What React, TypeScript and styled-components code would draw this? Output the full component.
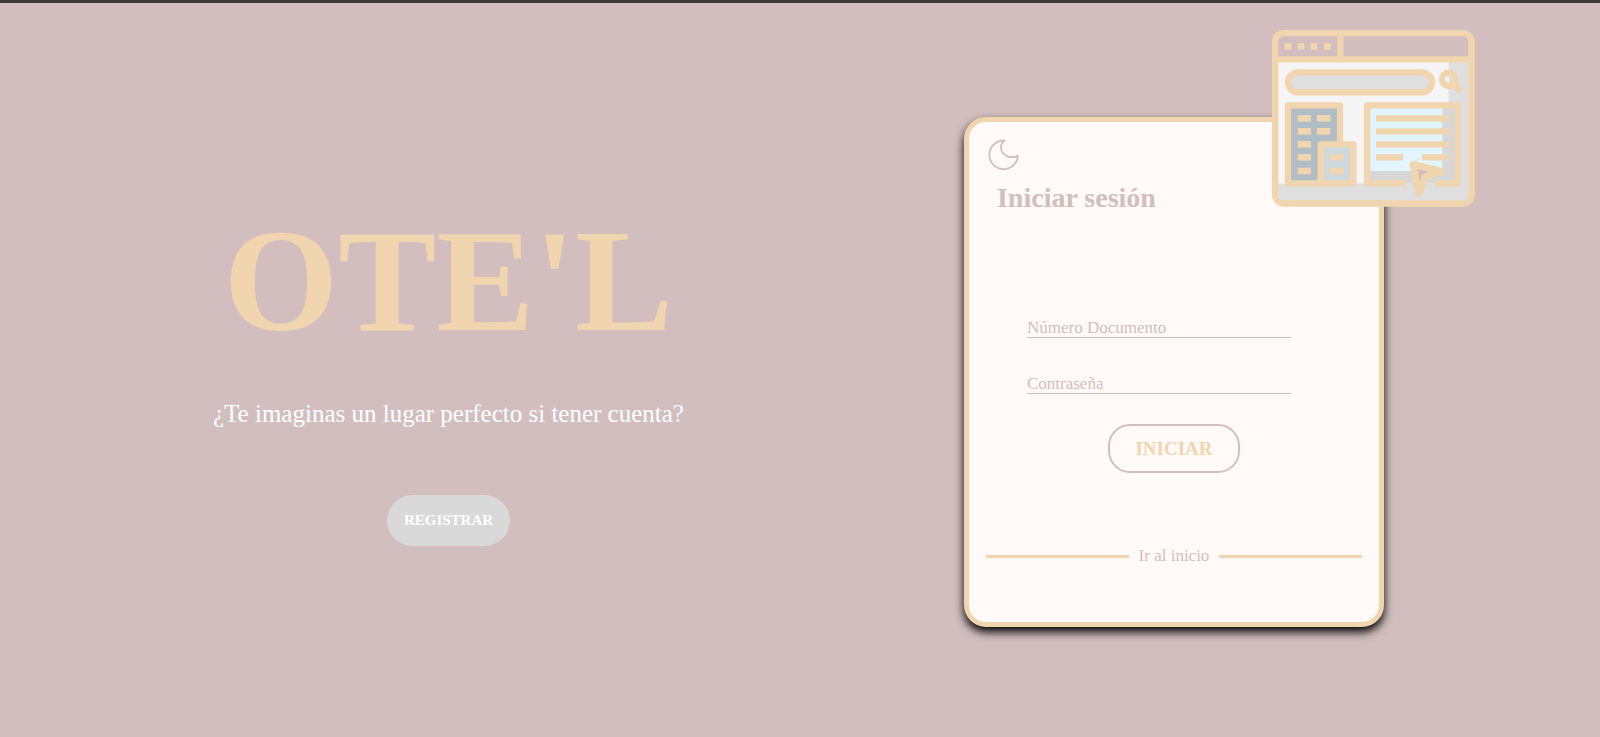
import React from "react";
import styled, { createGlobalStyle } from "styled-components";

const mauve = "#d2bebf";
const sand = "#f0d5ae";
const cream = "#fffaf7";

const GlobalStyle = createGlobalStyle`
  *, *::before, *::after { box-sizing: border-box; }
  html, body, #root { height: 100%; }
  body {
    margin: 0;
    background: ${mauve};
    font-family: "Liberation Serif", "Times New Roman", serif;
  }
`;

const Page = styled.div`
  min-height: 100%;
  display: flex;
  flex-direction: column;
  border-top: 3px solid #3d3b3a;
`;

const Main = styled.main`
  flex: 1;
  display: flex;
  flex-wrap: wrap;
  align-items: center;
  justify-content: space-around;
  padding: 4px 76px 0 73px;
`;

const Intro = styled.section`
  display: flex;
  flex-direction: column;
  align-items: center;
  gap: 32px;
`;

const Brand = styled.h1`
  margin: 0 0 4px;
  color: ${sand};
  font-size: 147px;
  line-height: 164px;
`;

const Tagline = styled.p`
  margin: 0 0 34px;
  color: #fff;
  font-size: 25px;
  line-height: 30px;
`;

const RegisterButton = styled.button`
  padding: 17px;
  border: 0;
  border-radius: 26px;
  background: #d9d9d9;
  color: #fff;
  font: bold 15px/17px "Liberation Serif", serif;
  cursor: pointer;
`;

const Card = styled.section`
  position: relative;
  width: 420px;
  padding: 17px 17px 56px;
  border: 5px solid ${sand};
  border-radius: 22px;
  background: ${cream};
  box-shadow: 0 5px 10px #000;
`;

const Illustration = styled.svg`
  position: absolute;
  top: -92px;
  right: -96px;
  width: 203px;
  height: 177px;
`;

const ThemeButton = styled.button`
  display: block;
  margin-left: 2px;
  padding: 0;
  border: 0;
  background: none;
  cursor: pointer;

  svg { display: block; }
`;

const Title = styled.h2`
  margin: 12px 0 0 11px;
  color: ${mauve};
  font-size: 28px;
  line-height: 32px;
`;

const Form = styled.form`
  display: flex;
  flex-direction: column;
  gap: 30px;
  padding: 98px 0 0 41px;
`;

const Field = styled.div`
  position: relative;
  width: 264px;

  label {
    position: absolute;
    left: 0;
    bottom: 0;
    color: ${mauve};
    font-size: 17px;
    line-height: 20px;
    pointer-events: none;
  }

  input {
    display: block;
    width: 100%;
    height: 26px;
    padding: 0;
    border: 0;
    border-bottom: 1px solid ${mauve};
    outline: 0;
    background: none;
    color: #8c7778;
    font: 17px/20px "Liberation Serif", serif;
  }

  input:focus + label,
  input:not(:placeholder-shown) + label {
    bottom: 22px;
  }
`;

const SubmitButton = styled.button`
  align-self: center;
  width: 132px;
  height: 49px;
  margin-right: 41px;
  padding: 0;
  border: 2px solid ${mauve};
  border-radius: 22px;
  background: none;
  color: ${sand};
  font: bold 19px/22px "Liberation Serif", serif;
  cursor: pointer;
`;

const HomeRow = styled.div`
  display: flex;
  align-items: center;
  gap: 10px;
  margin-top: 73px;

  &::before,
  &::after {
    content: "";
    flex: 1;
    height: 3px;
    background: ${sand};
  }

  a {
    color: ${mauve};
    font-size: 17px;
    line-height: 20px;
    text-decoration: none;
  }
`;

function Moon() {
  return (
    <svg width="31" height="31" viewBox="115 118 93 93" fill="none" stroke={mauve} strokeWidth="5.5" strokeLinejoin="round" aria-hidden="true">
      <path d="M165 122.500A43 43 0 1 0 205 168C185 179 154 169 154 142C154 134 158 127 165 122.500Z" />
    </svg>
  );
}

function BrowserDrawing() {
  const windows = [
    [113, 285], [171, 285], [113, 324], [171, 324], [113, 363],
    [113, 402], [113, 443], [211, 402], [211, 443],
  ];
  return (
    <Illustration viewBox="36 30 609 531" aria-hidden="true">
      <path d="M45 118H634V530Q634 551 612 551H67Q45 551 45 530Z" fill="#f5f5f5" />
      <path d="M566 118H634V530Q634 551 612 551H67Q45 551 45 530V491H566Z" fill="#dfdfdf" />
      <path d="M45 118V64Q45 39 70 39H610Q634 39 634 64V118Z" fill={mauve} />
      <rect x="321" y="256" width="273" height="235" fill="#d7d7d7" />
      <rect x="321" y="256" width="226" height="197" fill="#e2f4fd" />
      <rect x="84" y="256" width="156" height="235" fill="#b0bdc5" />
      <rect x="182" y="373" width="98" height="118" fill="#cfd8dc" />
      <g fill="none" stroke={sand} strokeWidth="19" strokeLinejoin="round">
        <rect x="45.500" y="39.500" width="589" height="511" rx="25" />
        <path d="M45 118H634M241 39V118" />
        <rect x="84" y="157" width="432" height="60" rx="30" fill="#dfdfdf" />
        <path d="M182 490H84V256H240V373" />
        <rect x="182" y="373" width="98" height="117" />
        <path d="M438 490H321V256H594V490H526" />
        <path d="M348 295H566M348 334H566M348 373H566M348 412H429M486 412H566" />
        <circle cx="566" cy="178" r="20" />
        <path d="M580 192L603 214" />
        <path d="M459 433L545 454L495 471L476 520Z" fill={mauve} strokeWidth="21" />
      </g>
      <g fill={sand}>
        {[74, 113, 152, 192].map((x) => (
          <rect key={x} x={x} y="69" width="20" height="20" />
        ))}
        {windows.map(([x, y]) => (
          <rect key={`${x}-${y}`} x={x} y={y} width="40" height="20" />
        ))}
      </g>
    </Illustration>
  );
}

export default function App() {
  return (
    <>
      <GlobalStyle />
      <Page>
        <Main>
          <Intro>
            <Brand>OTE'L</Brand>
            <Tagline>¿Te imaginas un lugar perfecto si tener cuenta?</Tagline>
            <RegisterButton type="button">REGISTRAR</RegisterButton>
          </Intro>
          <Card>
            <BrowserDrawing />
            <ThemeButton type="button" aria-label="Modo oscuro">
              <Moon />
            </ThemeButton>
            <Title>Iniciar sesión</Title>
            <Form onSubmit={(event) => event.preventDefault()}>
              <Field>
                <input id="documento" type="text" placeholder=" " />
                <label htmlFor="documento">Número Documento</label>
              </Field>
              <Field>
                <input id="clave" type="password" placeholder=" " />
                <label htmlFor="clave">Contraseña</label>
              </Field>
              <SubmitButton type="submit">INICIAR</SubmitButton>
            </Form>
            <HomeRow>
              <a href="#inicio">Ir al inicio</a>
            </HomeRow>
          </Card>
        </Main>
      </Page>
    </>
  );
}
